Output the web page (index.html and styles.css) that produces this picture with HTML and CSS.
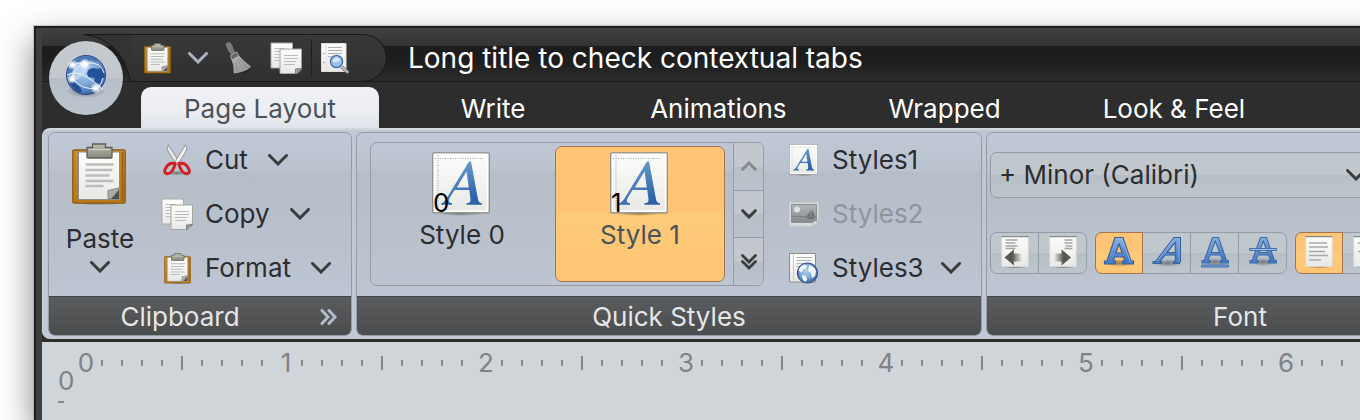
FILE: index.html
```html
<!DOCTYPE html>
<html lang="en">
<head>
<meta charset="utf-8">
<title>Long title to check contextual tabs</title>
<link rel="stylesheet" href="styles.css">
</head>
<body>
<svg class="defs" aria-hidden="true">
  <defs>
    <linearGradient id="paper" x1="0" y1="0" x2="0" y2="1"><stop offset="0" stop-color="#fdfdfc"/><stop offset="1" stop-color="#e8e8e6"/></linearGradient>
    <linearGradient id="board" x1="0" y1="0" x2="0" y2="1"><stop offset="0" stop-color="#c98a2c"/><stop offset="1" stop-color="#b87818"/></linearGradient>
    <linearGradient id="metal" x1="0" y1="0" x2="0" y2="1"><stop offset="0" stop-color="#b9bab0"/><stop offset=".5" stop-color="#a3a498"/><stop offset="1" stop-color="#85867c"/></linearGradient>
    <linearGradient id="blue" x1="0" y1="0" x2=".5" y2="1"><stop offset="0" stop-color="#7cabd8"/><stop offset="1" stop-color="#2c62a8"/></linearGradient>
    <linearGradient id="blueA" x1="0" y1="0" x2=".3" y2="1"><stop offset="0" stop-color="#97b7e4"/><stop offset="1" stop-color="#4179c8"/></linearGradient>
    <linearGradient id="fadeL" x1="0" x2="1"><stop offset=".45" stop-color="#555753"/><stop offset="1" stop-color="#555753" stop-opacity="0"/></linearGradient>
    <linearGradient id="fadeR" x1="0" x2="1"><stop offset="0" stop-color="#555753" stop-opacity="0"/><stop offset=".55" stop-color="#555753"/></linearGradient>
    <linearGradient id="grey" x1="0" y1="0" x2="0" y2="1"><stop offset="0" stop-color="#b0b5b9"/><stop offset="1" stop-color="#84898d"/></linearGradient>
    <linearGradient id="straw" x1="0" y1="0" x2="1" y2="1"><stop offset="0" stop-color="#b4b4b4"/><stop offset="1" stop-color="#8c8c8c"/></linearGradient>
    <radialGradient id="sea" cx=".45" cy=".4" r=".62"><stop offset="0" stop-color="#b4d0ee"/><stop offset=".55" stop-color="#7ea8d8"/><stop offset="1" stop-color="#35609f"/></radialGradient>
    <radialGradient id="glow"><stop offset="0" stop-color="#fff"/><stop offset=".35" stop-color="#fff" stop-opacity=".9"/><stop offset="1" stop-color="#fff" stop-opacity="0"/></radialGradient>
    <radialGradient id="shade"><stop offset="0" stop-color="#000" stop-opacity=".4"/><stop offset="1" stop-color="#000" stop-opacity="0"/></radialGradient>
  </defs>
  <symbol id="clipboard" viewBox="0 0 54 62">
    <ellipse cx="27" cy="60" rx="24" ry="2.5" fill="url(#shade)"/>
    <rect x=".8" y="6.8" width="52.4" height="53.4" rx="1.5" fill="url(#board)" stroke="#8a5a12" stroke-width="1.3"/>
    <path d="M6.500 9h41v47.500h-41z" fill="url(#paper)" stroke="#8c8c88"/>
    <path d="M50.500 9v49" stroke="#9a6616" stroke-width="2"/>
    <path d="M13.500 21.500h28M13.500 27h27M13.500 32.500h24M13.500 38h28M13.500 43h18" stroke="#bdbdbb" stroke-width="2.4"/>
    <path d="M36 55.500V47.500l4-.8 7-1.700v2l-7.500 8.500z" fill="#aaaba8" stroke="#858683"/>
    <path d="M39 56l8-9v9z" fill="#50514e"/>
    <path d="M15 4.500h5.500V1h13v3.500H40v9.500q0 1-1 1H16q-1 0-1-1z" fill="url(#metal)" stroke="#5e5f58" stroke-width="1.3"/>
    <path d="M17 6.500h21" stroke="#d4d5cb"/>
  </symbol>
  <symbol id="copy" viewBox="0 0 32 32">
    <path d="M1 1h21.500v25H1z" fill="url(#paper)" stroke="#a9aaa8"/>
    <path d="M4.500 6.500h10M4.500 9.500h7M4.500 12.500h5M4.500 15.500h5M4.500 18.500h5" stroke="#bcbcba"/>
    <path d="M10 7h21.500v20l-4.500 4.500H10z" fill="url(#paper)" stroke="#a2a3a0"/>
    <path d="M14 13.500h14M14 16.500h14M14 19.500h12M14 22.500h11" stroke="#bcbcba"/>
    <path d="M25.500 31.500v-4.500l6-.5z" fill="#9fa09d" stroke="#7e7f7c"/>
  </symbol>
  <symbol id="chev" viewBox="0 0 20 12">
    <path d="M1.500 1.500L10 10l8.500-8.500" fill="none" stroke="currentColor" stroke-width="3" stroke-linecap="round"/>
  </symbol>
  <symbol id="chevS" viewBox="0 0 16 10">
    <path d="M1.700 1.700L8 8l6.300-6.300" fill="none" stroke="currentColor" stroke-width="3" stroke-linecap="round"/>
  </symbol>
  <symbol id="scissors" viewBox="0 0 30 32">
    <ellipse cx="15" cy="29" rx="10" ry="2.5" fill="url(#shade)"/>
    <path d="M6.500.8Q4 4 6 7l8.500 14 3-2.500z" fill="#e6e6e3" stroke="#93948f"/>
    <path d="M23.500.8Q26 4 24 7l-8.500 14-3-2.500z" fill="#f2f2f0" stroke="#93948f"/>
    <path d="M13 19.500Q7 18 4 23.500q-3 5 .5 6 4.500 1 7.500-6z" fill="none" stroke="#d22026" stroke-width="3"/>
    <path d="M17 19.500q6-1.500 9 4 3 5-.5 6-4.500 1-7.500-6z" fill="none" stroke="#d22026" stroke-width="3"/>
  </symbol>
  <symbol id="broom" viewBox="0 0 28 32">
    <ellipse cx="19" cy="29" rx="9" ry="3" fill="url(#shade)"/>
    <path d="M1 2Q3.500-.8 6 2l3.500 8.500-3 2Q2.500 8 1 2z" fill="#777" stroke="#8f8f8f" stroke-width=".7"/>
    <path d="M5.500 13.500l6-3.500 2.500 4-7 4z" fill="#666" stroke="#a5a5a5"/>
    <path d="M7 18l7-4q4 5 11.500 10.500-4 5-16.500 6.500.5-8-2-13z" fill="url(#straw)" stroke="#b0b0b0" stroke-width=".7"/>
    <path d="M10 19.500l2.500 10M12.500 18l6 10M14 17l8.500 9" stroke="#858585" stroke-width=".7"/>
  </symbol>
  <symbol id="find" viewBox="0 0 28 31">
    <path d="M.5.5h24.500v28H.5z" fill="url(#paper)" stroke="#dededc"/>
    <path d="M5 1v27" stroke="#e0e0de"/>
    <path d="M2 10.500h1.500M2 19.500h1.500" stroke="#999"/>
    <path d="M7 4.500H21M7 7.500H21M7 10.500H21M7 13.500H11" stroke="#b0b0ae" stroke-width="1.2"/>
    <path d="M20 23.500l6.500 5.500" stroke="#77787a" stroke-width="3.4" stroke-linecap="round"/>
    <path d="M20 23.500l6.500 5.500" stroke="#d2d3d4" stroke-width="1.5" stroke-linecap="round"/>
    <circle cx="15.500" cy="18.500" r="7" fill="#a9c8ed" stroke="#e6e8ea" stroke-width="1"/>
    <circle cx="15.500" cy="18.500" r="6" fill="#9dc0ea" stroke="#3465a4" stroke-width="1.2"/>
    <path d="M11.500 19q0-4 4-4.500 4 .5 4 2.500-4 3-8 2z" fill="#d4e5f7"/>
  </symbol>
  <symbol id="globe" viewBox="0 0 42 46">
    <ellipse cx="21" cy="37" rx="20" ry="7" fill="url(#shade)"/>
    <circle cx="21" cy="21" r="19.500" fill="url(#sea)" stroke="#33408a" stroke-width="1"/>
    <path d="M10 6q5-3.500 11-4 7 0 12 4l-2 2-5-2-3 2-4-2-3 3-4-1z" fill="#3f6fb2" opacity=".85"/>
    <path d="M22 20q0-5 6-6l6 1 3-2q3 5 2.500 11l-3 1-1 4-3 3-3-3v-5l-6-1z" fill="#23529a"/>
    <path d="M3.500 13l4-2 2 3-3 4-4 3q0-4 1-8z" fill="#4877b8"/>
    <path d="M4 27l5 1 6 5 2 4-2 2Q7 36 4 27z" fill="#274f93"/>
    <path d="M9 10l9-3 5 3-2 8-8 8-6-3 1-6z" fill="#d7e6f6" opacity=".5"/>
    <path d="M7 24Q10 10 23 9t16 10M2 21q9-5 20 2t16 13M8 25q10 12 24 9 5-4 6-10M8 11q4-3 12-2" fill="none" stroke="#eaf3fc" stroke-width="1"/>
    <circle cx="7" cy="11" r="5" fill="url(#glow)"/><circle cx="20" cy="10" r="6" fill="url(#glow)"/>
    <circle cx="7" cy="25" r="5" fill="url(#glow)"/><circle cx="31" cy="34" r="6" fill="url(#glow)"/>
  </symbol>
  <symbol id="fontpage" viewBox="0 0 58 64">
    <ellipse cx="29" cy="61.500" rx="22" ry="2.5" fill="url(#shade)"/>
    <rect x=".8" y=".8" width="56.4" height="60" rx="1" fill="url(#paper)" stroke="#888983" stroke-width="1.3"/>
    <path d="M2.500 2.500h53v56.500h-53z" fill="none" stroke="#fff" stroke-width="1.5"/>
    <path d="M3 6.500h48M6 3v53" stroke="#a3a3a1" stroke-dasharray="1 1.500"/>
    <path d="M37 9.500h2l7 38q.7 3.500 4 3.700v1.600H34.500v-1.600q4.500-.2 4-3.700l-1.200-9.500H22.500l-5 8q-2.500 5 2.500 5.200v1.600H9v-1.600q3-.5 5.500-4.700zM34.500 19.500L24.800 35.500h12z" fill="url(#blue)"/>
  </symbol>
  <symbol id="picture" viewBox="0 0 30 25">
    <path d="M.5.5h29v19l-5 4.500H.5z" fill="#d8dbdd" stroke="#c7cccd"/>
    <path d="M2.500 2.500h25v18h-25z" fill="url(#grey)" stroke="#8d9194"/>
    <path d="M3 14.500h24" stroke="#7b8084"/>
    <circle cx="8" cy="7.500" r="3" fill="#dfe1e2"/>
    <path d="M21.500 7v7h-4q3-2 4-7zM22.500 8q3 3 3 6h-3zM17 15h9l-2 2h-5z" fill="#6a6f73"/>
    <path d="M24 24l.5-4.500 5.500-.5z" fill="#e2e5e6" stroke="#aeb2b5" stroke-width=".7"/>
  </symbol>
  <symbol id="webpage" viewBox="0 0 30 31">
    <path d="M.5.5H26.500V29H.5z" fill="url(#paper)" stroke="#8b8c89"/>
    <path d="M4.500 1v28" stroke="#cacac8"/>
    <path d="M7.500 4.500H23M7.500 7.500H22M7.500 10.500H15M7.500 13.500H11" stroke="#b5b5b3"/>
    <circle cx="18.500" cy="20" r="10" fill="url(#sea)" stroke="#394f8c" stroke-width="1.2"/>
    <path d="M9.500 18q1-5 5.500-6.500l3 1-1 3-3 1-1 3zM20 12q5 1 7 6l-1 5-3 2-1-5-3-2zM13 22l4 1 1 4-2 2q-3-2-3-7z" fill="#eef4fb"/>
  </symbol>
  <symbol id="sheet" viewBox="0 0 28 32">
    <ellipse cx="14" cy="31" rx="13" ry="1.2" fill="url(#shade)"/>
    <path d="M.7.5h26.600v30H.7z" fill="url(#paper)" stroke="#d8d9d7" stroke-width=".7"/>
    <path d="M.5.7h27" stroke="#898a87" stroke-width="1.2"/>
  </symbol>
  <symbol id="outdent" viewBox="0 0 28 32">
    <use href="#sheet"/>
    <path d="M4.500 4h12M4.500 7h10M4.500 10h12M4.500 12.500h10" stroke="#a4a5a2" stroke-width="1.4"/>
    <path d="M3.500 21.500l9.500-8.200v4.200h8v8h-8v4z" fill="url(#fadeL)"/>
  </symbol>
  <symbol id="indent" viewBox="0 0 28 32">
    <use href="#sheet"/>
    <path d="M15.500 4h8M15.500 7h8M16.500 10h7M15.500 12.500h8" stroke="#a4a5a2" stroke-width="1.4"/>
    <path d="M22 21.500l-9.500-8.200v4.200H5v8h7.500v4z" fill="url(#fadeR)"/>
  </symbol>
  <symbol id="left" viewBox="0 0 28 32">
    <use href="#sheet"/>
    <path d="M4 7h18M4 11h19M4 15.500h16M4 19.500h19M4 24h12" stroke="#a9aaa8" stroke-width="1.6"/>
  </symbol>
  <symbol id="center" viewBox="0 0 28 32">
    <use href="#sheet"/>
    <path d="M5 7h18M7 11h14M5 15.500h18M7 19.500h14M9 24h10" stroke="#a9aaa8" stroke-width="1.6"/>
  </symbol>
  <symbol id="bold" viewBox="0 0 32 32">
    <ellipse cx="16" cy="27" rx="13" ry="4" fill="url(#shade)"/>
    <path d="M12 1.500h8l8 23.500h2.500v3H19.500v-3h2.300l-1.300-4h-9l-1.300 4h2.300v3H1.500v-3H4zM16 8l-3.200 9h6.400z" fill="url(#blueA)" stroke="#356098" stroke-width="1.2"/>
    <path d="M13 3h6l8.500 23.200" fill="none" stroke="#a8c5ec" stroke-width=".8"/>
  </symbol>
  <symbol id="italic" viewBox="0 0 32 32">
    <ellipse cx="17" cy="27" rx="14" ry="4" fill="url(#shade)"/>
    <path d="M23 1.500h6.500V25.500h-1v2h-6v-2h1.800V19H14l-5 6.500h1.500v2H2v-2h2.500zM24.300 6.500L16 16.500h8.300z" fill="url(#blueA)" stroke="#356098" stroke-width="1.1"/>
    <path d="M23.500 2.800L6 25M28 3v23" fill="none" stroke="#a8c5ec" stroke-width=".7"/>
  </symbol>
  <symbol id="thinA" viewBox="0 0 32 32">
    <path d="M13.500 1.500h6L27.500 24.500h2v2.500h-8v-2.500h2l-2-5.500H11l-2 5.500h2v2.500H3v-2.500h2.200zM16.300 5L12 16.500h8.600z" fill="url(#blueA)" stroke="#3c69a4" stroke-width="1.1"/>
  </symbol>
  <symbol id="underline" viewBox="0 0 32 32">
    <ellipse cx="16" cy="26" rx="13" ry="4" fill="url(#shade)"/>
    <use href="#thinA"/>
    <path d="M2.500 29h27v2h-27z" fill="#7fa8df" stroke="#3465a4" stroke-width=".9"/>
  </symbol>
  <symbol id="strike" viewBox="0 0 32 32">
    <ellipse cx="16" cy="26" rx="13" ry="4" fill="url(#shade)"/>
    <use href="#thinA"/>
    <path d="M2.500 12.500h27v2h-27z" fill="#a3c1ea" stroke="#3465a4" stroke-width=".9"/>
  </symbol>
</svg>

<main class="window">
  <header class="header">
    <div class="orb-cell">
      <svg class="orb-edge" viewBox="0 0 48 48" aria-hidden="true"><path d="M0 .5Q38 4 48 47.500V.5z" fill="#333"/><path d="M0 .5H48M0 .5Q38 4 47.500 47" fill="none" stroke="#191919"/></svg>
      <button class="orb" aria-label="Application menu"><svg class="ic-globe"><use href="#globe"/></svg></button>
    </div>
    <div class="titlebar">
      <div class="quick">
        <button aria-label="Paste"><svg class="ic-clip"><use href="#clipboard"/></svg></button>
        <button aria-label="Paste options" class="pale"><svg class="ic-chev"><use href="#chev"/></svg></button>
        <button aria-label="Clean"><svg class="ic-broom"><use href="#broom"/></svg></button>
        <div class="quick-pair">
          <button aria-label="Copy"><svg class="ic-32"><use href="#copy"/></svg></button>
          <span class="divider"></span>
          <button aria-label="Find"><svg class="ic-find"><use href="#find"/></svg></button>
        </div>
      </div>
      <h1 class="title">Long title to check contextual tabs</h1>
    </div>
    <nav class="tabs" role="tablist">
      <button class="tab active" role="tab" aria-selected="true">Page Layout</button>
      <button class="tab" role="tab">Write</button>
      <button class="tab" role="tab">Animations</button>
      <button class="tab" role="tab">Wrapped</button>
      <button class="tab" role="tab">Look &amp; Feel</button>
    </nav>
  </header>

  <div class="ribbon">
    <section class="band clipboard">
      <div class="band-body">
        <button class="big"><svg class="ic-big"><use href="#clipboard"/></svg><span>Paste</span><svg class="ic-chev"><use href="#chev"/></svg></button>
        <div class="stack">
          <button class="cmd"><span class="slot"><svg class="ic-cut"><use href="#scissors"/></svg></span>Cut<svg class="ic-chev"><use href="#chev"/></svg></button>
          <button class="cmd"><span class="slot"><svg class="ic-32"><use href="#copy"/></svg></span>Copy<svg class="ic-chev"><use href="#chev"/></svg></button>
          <button class="cmd"><span class="slot"><svg class="ic-clip"><use href="#clipboard"/></svg></span>Format<svg class="ic-chev"><use href="#chev"/></svg></button>
        </div>
      </div>
      <div class="caption"><span>Clipboard</span><button class="launch" aria-label="Expand clipboard"><svg class="ic-launch" viewBox="0 0 18 16"><path d="M2 1.500L8 8l-6 6.500M9 1.500L15 8l-6 6.500" fill="none" stroke="currentColor" stroke-width="3" stroke-linecap="round"/></svg></button></div>
    </section>

    <section class="band styles">
      <div class="band-body">
        <div class="gallery">
          <button class="item"><svg class="ic-style"><use href="#fontpage"/></svg><span class="num">0</span><span>Style 0</span></button>
          <button class="item picked"><svg class="ic-style"><use href="#fontpage"/></svg><span class="num">1</span><span>Style 1</span></button>
          <div class="scroller">
            <button disabled aria-label="Scroll up"><svg class="ic-small flip"><use href="#chevS"/></svg></button>
            <button aria-label="Scroll down"><svg class="ic-small"><use href="#chevS"/></svg></button>
            <button aria-label="Expand"><svg class="ic-double" viewBox="0 0 16 16"><path d="M1.500 1.500L8 8l6.500-6.500M1.500 7.500L8 14l6.500-6.500" fill="none" stroke="currentColor" stroke-width="2.8" stroke-linecap="round"/></svg></button>
          </div>
        </div>
        <div class="stack">
          <button class="cmd"><span class="slot"><svg class="ic-fp"><use href="#fontpage"/></svg></span>Styles1</button>
          <button class="cmd" disabled><span class="slot"><svg class="ic-pic"><use href="#picture"/></svg></span>Styles2</button>
          <button class="cmd"><span class="slot"><svg class="ic-web"><use href="#webpage"/></svg></span>Styles3<svg class="ic-chev"><use href="#chev"/></svg></button>
        </div>
      </div>
      <div class="caption"><span>Quick Styles</span></div>
    </section>

    <section class="band font">
      <div class="band-body">
        <div class="combo"><select aria-label="Font family"><option>+ Minor (Calibri)</option></select><svg class="ic-chev"><use href="#chev"/></svg></div>
        <div class="tools">
          <div class="segment">
            <button aria-label="Decrease indent"><svg class="ic-sheet"><use href="#outdent"/></svg></button>
            <button aria-label="Increase indent"><svg class="ic-sheet"><use href="#indent"/></svg></button>
          </div>
          <div class="segment">
            <button class="on" aria-label="Bold"><svg class="ic-32"><use href="#bold"/></svg></button>
            <button aria-label="Italic"><svg class="ic-32"><use href="#italic"/></svg></button>
            <button aria-label="Underline"><svg class="ic-32"><use href="#underline"/></svg></button>
            <button aria-label="Strikethrough"><svg class="ic-32"><use href="#strike"/></svg></button>
          </div>
          <div class="segment">
            <button class="on" aria-label="Align left"><svg class="ic-sheet"><use href="#left"/></svg></button>
            <button aria-label="Align center"><svg class="ic-sheet"><use href="#center"/></svg></button>
          </div>
        </div>
      </div>
      <div class="caption"><span>Font</span></div>
    </section>
  </div>

  <div class="page">
    <div class="ruler">
      <div class="unit"><span>0</span><i></i><i></i><i></i><i></i><i></i><i></i><i></i><i></i><i></i></div>
      <div class="unit"><span>1</span><i></i><i></i><i></i><i></i><i></i><i></i><i></i><i></i><i></i></div>
      <div class="unit"><span>2</span><i></i><i></i><i></i><i></i><i></i><i></i><i></i><i></i><i></i></div>
      <div class="unit"><span>3</span><i></i><i></i><i></i><i></i><i></i><i></i><i></i><i></i><i></i></div>
      <div class="unit"><span>4</span><i></i><i></i><i></i><i></i><i></i><i></i><i></i><i></i><i></i></div>
      <div class="unit"><span>5</span><i></i><i></i><i></i><i></i><i></i><i></i><i></i><i></i><i></i></div>
      <div class="unit"><span>6</span><i></i><i></i><i></i><i></i><i></i><i></i><i></i><i></i><i></i></div>
    </div>
    <div class="vruler"><span>0</span><i></i></div>
  </div>
</main>
</body>
</html>
```

FILE: styles.css
```css
* { box-sizing: border-box; }
html, body { height: 100%; }
body {
  margin: 0;
  padding: 26px 0 0 34px;
  overflow: hidden;
  background: #fff;
  color: #2b2d30;
  font: 26px/32px Inter, "Liberation Sans", sans-serif;
}
button, select { font: inherit; color: inherit; background: none; border: 0; padding: 0; margin: 0; }
svg { display: block; flex: none; }
.defs { position: absolute; width: 0; height: 0; }

.ic-clip { width: 27px; height: 31px; }
.ic-chev { width: 20px; height: 12px; }
.ic-broom { width: 28px; height: 32px; }
.ic-32 { width: 32px; height: 32px; }
.ic-find { width: 28px; height: 31px; }
.ic-globe { width: 42px; height: 46px; }
.ic-big { width: 54px; height: 62px; }
.ic-cut { width: 30px; height: 32px; }
.ic-launch { width: 18px; height: 16px; }
.ic-style { width: 58px; height: 64px; margin-right: 2px; }
.ic-small { width: 16px; height: 10px; }
.ic-double { width: 16px; height: 16px; }
.ic-fp { width: 29px; height: 32px; }
.ic-pic { width: 30px; height: 25px; }
.ic-web { width: 30px; height: 31px; }
.ic-sheet { width: 28px; height: 32px; }
.flip { transform: rotate(180deg); }

.window {
  display: flex;
  flex-direction: column;
  height: 100%;
  margin-right: -48px;
  border: solid #1e1e1e;
  border-width: 2px 0 0 2px;
  background: linear-gradient(to right, #3e3e3e 6px, #2d2d2d 6px);
  box-shadow: 0 0 0 1px rgba(150, 160, 155, .5), 0 14px 32px rgba(0, 0, 0, .5);
  padding-left: 6px;
}

.header {
  display: grid;
  grid-template-columns: 89px 1fr;
  grid-template-rows: 54px 46px;
  background: linear-gradient(#414141 0, #333 18px, #1c1c1c 18px, #1e1e1e 34px, #2c2c2c 53px, #191919 53px, #191919 54px, #2d2d2d 54px);
}
.orb-cell { position: relative; grid-row: 1 / 3; padding: 13px 0 0 7px; }
.orb-edge { position: absolute; right: 0; top: 6px; width: 48px; height: 48px; }
.orb {
  position: relative;
  display: grid;
  place-items: center;
  width: 74px;
  height: 74px;
  padding-bottom: 2px;
  border-radius: 50%;
  background: linear-gradient(#c3c9cd, #c2c8cd 50%, #b6bec8 50%, #bdc5cf);
}
.titlebar { display: flex; align-items: flex-start; padding-top: 6px; gap: 21px; }
.quick {
  display: flex;
  align-items: center;
  gap: 17px;
  height: 48px;
  padding: 0 37px 0 13px;
  border: solid #191919;
  border-width: 1px 1px 1px 0;
  border-radius: 0 24px 24px 0;
  background: linear-gradient(#383838, #303030);
}
.quick .pale { color: #a9b4c2; }
.quick-pair { display: flex; align-items: center; gap: 9px; }
.divider { width: 1px; height: 38px; background: #1f1f1f; }
.title { margin: 0; padding-top: 8px; color: #fff; font: inherit; font-size: 28px; white-space: nowrap; }
.tabs { display: flex; gap: 16px; padding: 5px 0 0 10px; }
.tab { flex: none; min-width: 196px; padding: 3px 43px 0; color: #fff; white-space: nowrap; border-radius: 10px 10px 0 0; }
.tab.active { color: #4a525c; background: linear-gradient(#eff1f5, #eceef3 60%, #dfe3e9); }

.ribbon {
  display: flex;
  gap: 4px;
  padding: 2px 0 1px 5px;
  border: solid #d0d6da;
  border-width: 2px 0 2px 1px;
  border-bottom-color: #c3cad0;
  border-radius: 8px 0 0 8px;
  background: #c0c8d6;
}
.band {
  display: flex;
  flex: none;
  flex-direction: column;
  border: 1px solid #929da6;
  border-radius: 7px;
  overflow: hidden;
  background: linear-gradient(#c1c9d8 0, #bac2ce 39px, #b5bdc6 39px, #bec5d3 163px);
}
.band-body { display: flex; height: 163px; }
.caption {
  display: flex;
  align-items: center;
  height: 39px;
  padding-top: 2px;
  border-top: 1px solid #43474a;
  color: #e4e6e8;
  background: linear-gradient(#5a5c5e, #4b4c4e);
}
.caption span { flex: 1; text-align: center; }
.launch { width: 40px; padding-left: 9px; color: #b3bccb; }

.clipboard .band-body { gap: 27px; padding: 0 16px 0 17px; }
.clipboard { min-width: 304px; }
.big { display: flex; flex-direction: column; align-items: center; width: 68px; padding-top: 10px; }
.big svg:first-child { margin-right: 2px; }
.big span { margin: 18px 0 6px; }
.stack { display: flex; flex-direction: column; }
.cmd { display: flex; align-items: center; height: 54px; color: #2b2d30; }
.cmd:disabled { color: #8e969f; }
.cmd .ic-chev, .big .ic-chev, .combo .ic-chev { color: #3b3c3e; }
.cmd > .ic-chev { margin-left: 20px; }
.slot { display: flex; justify-content: center; width: 32px; margin-right: 12px; }

.styles { min-width: 626px; }
.styles .band-body { padding: 9px 18px 0 13px; gap: 25px; }
.styles .stack { margin-top: -9px; }
.styles .slot { justify-content: flex-start; margin-right: 11px; }
.styles .cmd > .ic-chev { margin-left: 17px; }
.gallery {
  display: flex;
  align-items: center;
  gap: 8px;
  height: 144px;
  padding-left: 6px;
  border: 1px solid #929da6;
  border-radius: 7px;
  overflow: hidden;
}
.item {
  position: relative;
  display: flex;
  flex-direction: column;
  align-items: center;
  gap: 3px;
  width: 170px;
  height: 136px;
  padding-top: 5px;
  border: 1px solid transparent;
  border-radius: 7px;
}
.item.picked { color: #4a525c; border-color: #a5764e; background: linear-gradient(#ffc576 50%, #fbcb79 50%, #ffc675 80%); }
.num { position: absolute; left: 55px; top: 40px; color: #000; }
.scroller { display: flex; flex-direction: column; align-self: stretch; width: 30px; border-left: 1px solid #929da6; }
.scroller button { display: grid; flex: 1; place-items: center; color: #3b3c3e; background: linear-gradient(#c2c8ce 50%, #b6bec6 50%, #bcc4cd); }
.scroller button + button { border-top: 1px solid #929da6; }
.scroller button:disabled { color: #868b90; }

.font { min-width: 508px; }
.font .band-body { flex-direction: column; gap: 34px; padding: 19px 0 0 3px; }
.combo { position: relative; width: 388px; }
.combo select {
  display: block;
  width: 100%;
  height: 46px;
  padding-left: 8px;
  border: 1px solid #929da6;
  border-radius: 7px;
  appearance: none;
  background: linear-gradient(#c1c8cd 50%, #b6bfc6 50%, #bec6cd);
}
.combo .ic-chev { position: absolute; right: 12px; top: 17px; pointer-events: none; }
.tools { display: flex; gap: 8px; }
.segment { display: flex; border: 1px solid #929da6; border-radius: 7px; background: linear-gradient(#c1c8cd 50%, #b6bfc6 50%, #bec6cd); }
.segment button { display: grid; place-items: center; width: 47px; height: 40px; padding-bottom: 2px; }
.segment button + button { border-left: 1px solid #929da6; }
.segment button:last-child { width: 48px; }
.segment .on { margin: -1px 0 -1px -1px; width: 48px; height: 42px; border: 1px solid #a5764e; border-radius: 7px 0 0 7px; background: linear-gradient(#ffc576 50%, #fbcb79 50%, #ffc675 90%); }
.segment .on + button { border-left: 0; }
.segment button:nth-child(3) { width: 48px; }

.page { flex: 1; margin-top: 3px; padding: 5px 0 0 16px; color: #808284; background: #d0d5d9; }
.ruler { display: flex; padding-left: 18px; }
.unit { display: flex; flex: none; align-items: center; gap: 18px; width: 200px; }
.unit span { width: 20px; margin-right: -13px; text-align: center; }
.unit i { flex: none; width: 2px; height: 6px; background: #858789; }
.unit i:nth-of-type(5) { height: 14px; }
.vruler { display: flex; flex-direction: column; align-items: flex-start; margin-top: -14px; }
.vruler i { width: 6px; height: 2px; margin-top: 4px; background: #858789; }
```
